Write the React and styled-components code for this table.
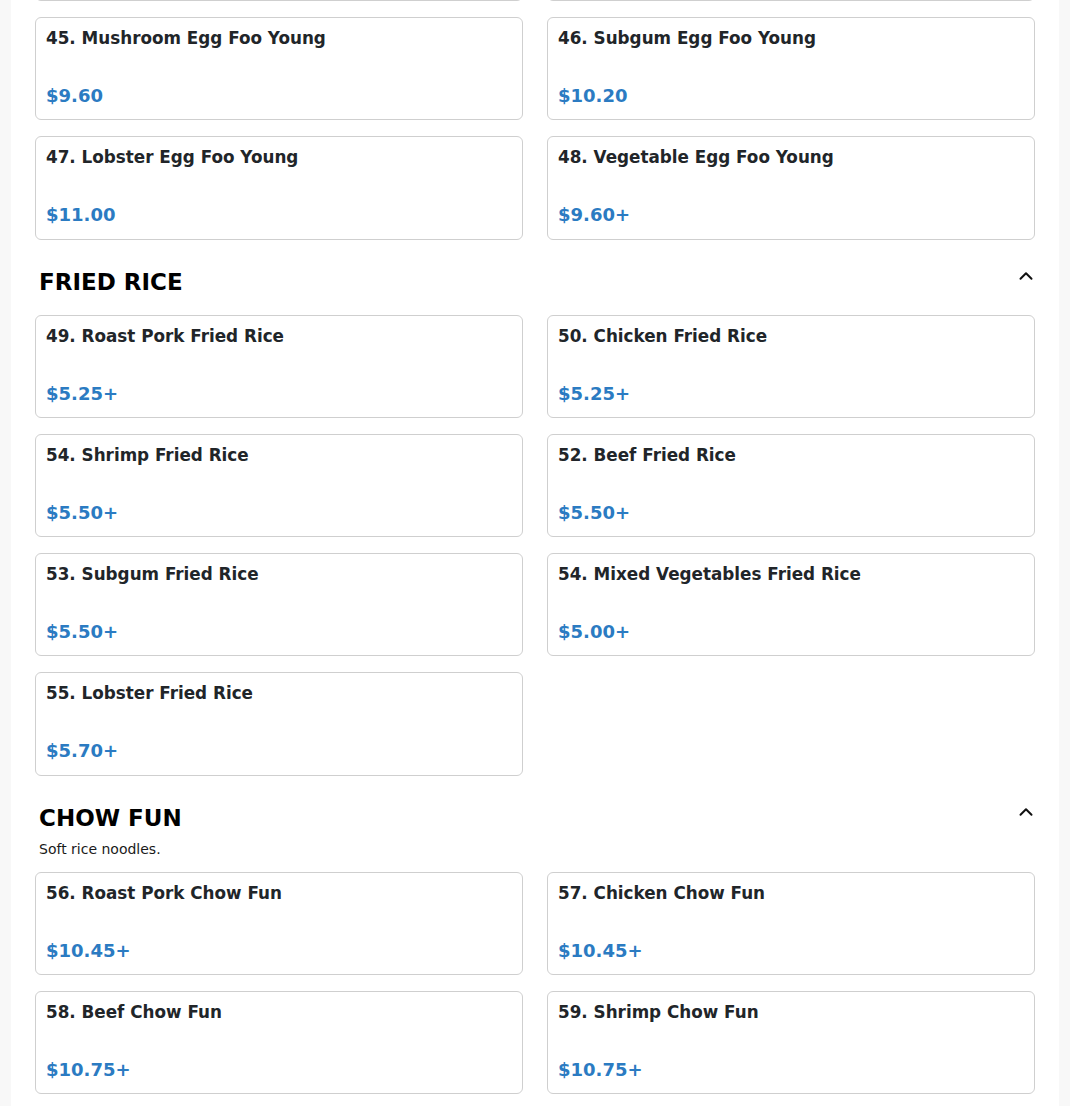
import React from "react";
import styled, { createGlobalStyle } from "styled-components";
import { ChevronUp } from "lucide-react";

const GlobalStyle = createGlobalStyle`
  html, body {
    margin: 0;
    padding: 0;
    overflow: hidden;
    background: #f8f8f8;
    font-family: "DejaVu Sans", "Liberation Sans", sans-serif;
  }
`;

const Viewport = styled.div`
  height: 1106px;
  overflow: hidden;
`;

const Page = styled.main`
  max-width: 1048px;
  margin: 0 auto;
  background: #ffffff;
  padding: 0 24px 40px;
  box-sizing: border-box;
  min-height: 1300px;
`;

const Scrolled = styled.div`
  margin-top: -102.4px;
`;

const Section = styled.section`
  & + & {
    margin-top: 28px;
  }
`;

const SectionHeader = styled.header`
  display: flex;
  justify-content: space-between;
  align-items: flex-start;
  padding-left: 4px;
  margin-bottom: ${(p) => (p.$hasDesc ? "14px" : "18px")};
`;

const HeaderText = styled.div`
  display: flex;
  flex-direction: column;
`;

const SectionTitle = styled.h2`
  margin: 0;
  font-size: 23px;
  line-height: 29px;
  font-weight: 700;
  color: #000;
`;

const SectionDesc = styled.p`
  margin: 8px 0 0;
  font-size: 14px;
  line-height: 17px;
  color: #1a1a1a;
`;

const CollapseButton = styled.button`
  border: none;
  background: none;
  padding: 0;
  margin: -4px -3px 0 0;
  width: 24px;
  height: 24px;
  color: #111;
  display: flex;
  align-items: center;
  justify-content: center;
  cursor: pointer;
`;

const Grid = styled.div`
  display: grid;
  grid-template-columns: 1fr 1fr;
  column-gap: 24px;
  row-gap: 16px;
`;

const Card = styled.article`
  border: 1px solid #cfcfcf;
  border-radius: 6px;
  padding: 10px 10px 13px;
  display: flex;
  flex-direction: column;
  background: #fff;
`;

const ItemName = styled.h3`
  margin: 0;
  font-size: 16.8px;
  line-height: 20px;
  font-weight: 700;
  color: #212529;
`;

const Price = styled.span`
  margin-top: 38px;
  font-size: 18px;
  line-height: 20.3px;
  font-weight: 700;
  color: #2b7bc2;
`;

const sections = [
  {
    title: "EGG FOO YOUNG",
    hideHeader: true,
    items: [
      ["43. Shrimp Egg Foo Young", "$10.20"],
      ["44. Beef Egg Foo Young", "$10.20"],
      ["45. Mushroom Egg Foo Young", "$9.60"],
      ["46. Subgum Egg Foo Young", "$10.20"],
      ["47. Lobster Egg Foo Young", "$11.00"],
      ["48. Vegetable Egg Foo Young", "$9.60+"],
    ],
  },
  {
    title: "FRIED RICE",
    items: [
      ["49. Roast Pork Fried Rice", "$5.25+"],
      ["50. Chicken Fried Rice", "$5.25+"],
      ["54. Shrimp Fried Rice", "$5.50+"],
      ["52. Beef Fried Rice", "$5.50+"],
      ["53. Subgum Fried Rice", "$5.50+"],
      ["54. Mixed Vegetables Fried Rice", "$5.00+"],
      ["55. Lobster Fried Rice", "$5.70+"],
    ],
  },
  {
    title: "CHOW FUN",
    desc: "Soft rice noodles.",
    items: [
      ["56. Roast Pork Chow Fun", "$10.45+"],
      ["57. Chicken Chow Fun", "$10.45+"],
      ["58. Beef Chow Fun", "$10.75+"],
      ["59. Shrimp Chow Fun", "$10.75+"],
      ["60. Combination Chow Fun", "$11.25+"],
    ],
  },
];

export default function App() {
  return (
    <Viewport>
      <GlobalStyle />
      <Page>
        <Scrolled>
          {sections.map((s) => (
            <Section key={s.title}>
              {!s.hideHeader && (
                <SectionHeader $hasDesc={!!s.desc}>
                  <HeaderText>
                    <SectionTitle>{s.title}</SectionTitle>
                    {s.desc && <SectionDesc>{s.desc}</SectionDesc>}
                  </HeaderText>
                  <CollapseButton aria-label="Collapse section">
                    <ChevronUp size={22} strokeWidth={2.2} />
                  </CollapseButton>
                </SectionHeader>
              )}
              <Grid>
                {s.items.map(([name, price], i) => (
                  <Card key={name + i}>
                    <ItemName>{name}</ItemName>
                    <Price>{price}</Price>
                  </Card>
                ))}
              </Grid>
            </Section>
          ))}
        </Scrolled>
      </Page>
    </Viewport>
  );
}
